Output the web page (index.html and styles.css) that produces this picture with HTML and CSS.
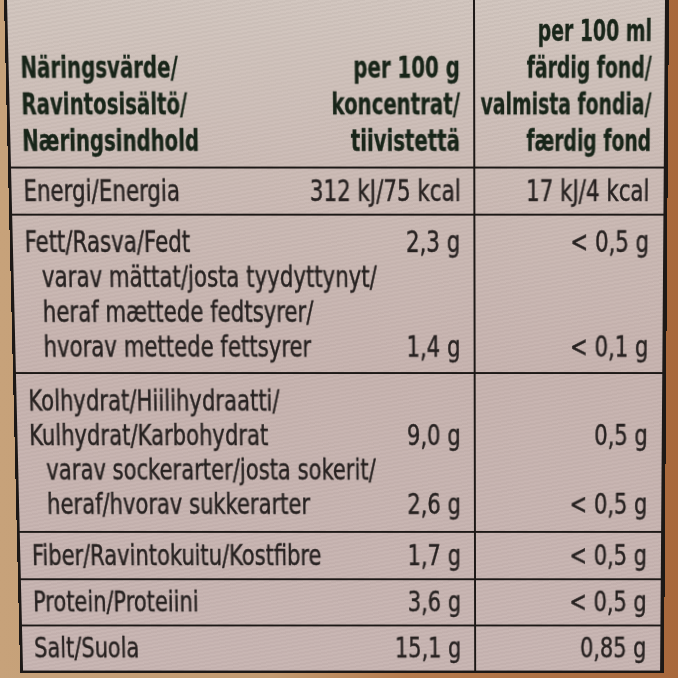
FILE: index.html
```html
<!DOCTYPE html>
<html lang="sv">
<head>
<meta charset="utf-8">
<title>Näringsvärde</title>
<link rel="stylesheet" href="styles.css">
</head>
<body>
<div class="label">
  <div class="row head">
    <div class="name"><div class="t">Näringsvärde/<br>Ravintosisältö/<br>Næringsindhold</div></div>
    <div class="v1"><div class="t">per 100 g<br>koncentrat/<br>tiivistettä</div></div>
    <div class="v2"><div class="t">per 100 ml<br>färdig fond/<br>valmista fondia/<br>færdig fond</div></div>
  </div>
  <div class="row energy">
    <div class="name"><div class="t">Energi/Energia</div></div>
    <div class="v1"><div class="t">312 kJ/75 kcal</div></div>
    <div class="v2"><div class="t">17 kJ/4 kcal</div></div>
  </div>
  <div class="row fett">
    <div class="name">
      <div class="t">
        <div>Fett/Rasva/Fedt</div>
        <div class="sub">varav mättat/josta tyydyttynyt/<br>heraf mættede fedtsyrer/<br>hvorav mettede fettsyrer</div>
      </div>
    </div>
    <div class="v1"><div class="t">2,3 g<br>&nbsp;<br>&nbsp;<br>1,4 g</div></div>
    <div class="v2"><div class="t">&lt; 0,5 g<br>&nbsp;<br>&nbsp;<br>&lt; 0,1 g</div></div>
  </div>
  <div class="row kolh">
    <div class="name">
      <div class="t">
        <div>Kolhydrat/Hiilihydraatti/<br>Kulhydrat/Karbohydrat</div>
        <div class="sub">varav sockerarter/josta sokerit/<br>heraf/hvorav sukkerarter</div>
      </div>
    </div>
    <div class="v1"><div class="t">&nbsp;<br>9,0 g<br>&nbsp;<br>2,6 g</div></div>
    <div class="v2"><div class="t">&nbsp;<br>0,5 g<br>&nbsp;<br>&lt; 0,5 g</div></div>
  </div>
  <div class="row fiber">
    <div class="name"><div class="t">Fiber/Ravintokuitu/Kostfibre</div></div>
    <div class="v1"><div class="t">1,7 g</div></div>
    <div class="v2"><div class="t">&lt; 0,5 g</div></div>
  </div>
  <div class="row protein">
    <div class="name"><div class="t">Protein/Proteiini</div></div>
    <div class="v1"><div class="t">3,6 g</div></div>
    <div class="v2"><div class="t">&lt; 0,5 g</div></div>
  </div>
  <div class="row salt">
    <div class="name"><div class="t">Salt/Suola</div></div>
    <div class="v1"><div class="t">15,1 g</div></div>
    <div class="v2"><div class="t">0,85 g</div></div>
  </div>
</div>
</body>
</html>
```
FILE: styles.css
```css
:root {
  --ink: #1c1816;
  --text: #272221;
  --head: #182519;
}

html, body {
  margin: 0;
  padding: 0;
  height: 678px;
  overflow: hidden;
}

body {
  background: linear-gradient(90deg, #c7a27a 0%, #c29a70 40%, #b57a4c 60%, #a8683c 100%);
  font-family: "DejaVu Sans Condensed", "DejaVu Sans", sans-serif;
  font-stretch: condensed;
  font-size: 30px;
  color: var(--text);
}

.label {
  width: 665px;
  box-sizing: border-box;
  margin-left: 4px;
  border-left: 3px solid var(--ink);
  border-right: 4px solid var(--ink);
  border-bottom: 3px solid var(--ink);
  background:
    repeating-linear-gradient(-10deg, rgba(255,255,255,0.035) 0 2px, rgba(0,0,0,0.02) 2px 4px),
    linear-gradient(180deg, #d0c4bd 0%, #cab9b3 28%, #c6b2ae 55%, #c7b4b1 100%);
  transform-origin: 507px 0;
  transform: perspective(736px) rotateX(-2deg);
}

.row {
  display: grid;
  grid-template-columns: minmax(0, 1fr) auto 190px;
  border-bottom: 2px solid var(--ink);
  line-height: 36px;
  --sx: 0.8;
}

.row > * {
  padding-top: var(--pt);
  padding-bottom: var(--pb);
  white-space: nowrap;
}

.t {
  transform: scaleX(var(--sx));
  -webkit-text-stroke: 0.45px currentColor;
}

.name {
  padding-left: 12px;
}

.name .t {
  transform-origin: 0 0;
}

.sub {
  padding-left: 21px;
}

.v1,
.v2 {
  display: flex;
  justify-content: flex-end;
}

.v1 {
  padding-right: 13px;
  border-right: 2px solid var(--ink);
}

.v2 {
  padding-right: 14px;
}

.v1 .t,
.v2 .t {
  flex: none;
  text-align: right;
  transform-origin: 100% 0;
}

.head {
  font-weight: bold;
  color: var(--head);
  line-height: 37px;
  --sx: 0.735;
  --pt: 12px;
  --pb: 8px;
}

.head .t {
  -webkit-text-stroke: 0.3px currentColor;
}

.head .v2 {
  padding-right: 13px;
  --sx: 0.7;
}

.head .name,
.head .v1 {
  padding-top: 49px;
}

.energy { --pt: 5px; --pb: 5px; }
.fett { --pt: 9px; --pb: 8px; }
.kolh { --pt: 10px; --pb: 10px; }
.fiber { --pt: 6px; --pb: 6px; }
.protein { --pt: 5px; --pb: 6px; }
.salt { --pt: 5px; --pb: 6px; border-bottom: none; }
```
